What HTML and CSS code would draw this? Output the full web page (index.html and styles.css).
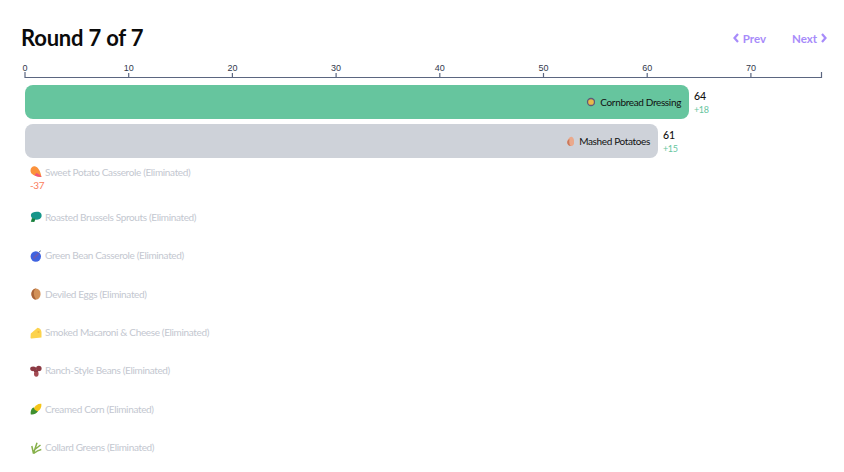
FILE: index.html
```html
<!DOCTYPE html>
<html lang="en">
<head>
<meta charset="utf-8">
<title>Round 7 of 7</title>
<link rel="stylesheet" href="styles.css">
</head>
<body>
<svg width="0" height="0" class="defs">
  <symbol id="i-corn" viewBox="0 0 12 12"><circle cx="8" cy="6" r="3.500" fill="#e9b949" stroke="#5f5a78" stroke-width="1.300"/></symbol>
  <symbol id="i-potato" viewBox="0 0 12 12"><g transform="translate(3.500 .8) scale(.85 .95)"><path d="M6.800 1C9 1 10.300 4 10.300 6.600 10.300 9 8.600 10.800 6.300 10.800 3.900 10.800 2 9.200 2 6.900 2 4.400 4.400 1 6.800 1Z" fill="#eaa98c"/><path d="M2 6.900C2 9.200 3.900 10.800 6.300 10.800 4.800 9.600 4 7.500 4.600 3C3 4.400 2 5.500 2 6.900Z" fill="#c9785c"/></g></symbol>
  <symbol id="i-sweet" viewBox="0 0 12 12"><path d="M.5 4.500C.5 1.500 3-.2 5.500.5 8.500 1.400 10.800 6 11.500 11 7.500 10.800 3.500 9.800 1.800 7.800 1 7 .5 5.800.5 4.500Z" fill="#fb923c"/><path d="M6.500 7C8.500 8 10.500 9 11.500 11 9 11.200 6.500 10.500 4.500 9.300Z" fill="#f2557a"/></symbol>
  <symbol id="i-sprout" viewBox="0 0 12 12"><path d="M1 3.500C1.500 1 5.500.3 8.500.8 11 1.300 12 3.500 11.500 5.800 10.800 8.300 7.500 9 5 8.500 2.500 8 .5 6 1 3.500Z" fill="#16968a"/><path d="M2 7 5.500 8 4.300 11 .8 10.800Z" fill="#17803d"/></symbol>
  <symbol id="i-bean" viewBox="0 0 12 12"><circle cx="5.800" cy="6.500" r="5.200" fill="#3f63e0"/><path d="M3.500 8.500 8.500 3.500" stroke="#6d5bb0" stroke-width="1.800"/><path d="M9 2 10.800.8" stroke="#55708f" stroke-width="1"/></symbol>
  <symbol id="i-egg" viewBox="0 0 12 12"><ellipse cx="6" cy="6" rx="4.600" ry="5.600" fill="#d29158"/><path d="M6 .4C3.200 1.500 2.800 8 6.500 11.600 3.500 11.800 1.400 9 1.400 6 1.400 3 3.500.4 6 .4Z" fill="#a9653a"/></symbol>
  <symbol id="i-cheese" viewBox="0 0 12 12"><path d="M.8 6.500 7.500.8C10 1.200 11.500 3 11.500 5.500V10.500L1.500 11.500C.8 11.500.5 11 .5 10.500Z" fill="#fcd34d"/><circle cx="8.500" cy="5" r="1.100" fill="#f2b63c"/></symbol>
  <symbol id="i-beans" viewBox="0 0 12 12"><ellipse cx="3.200" cy="3.800" rx="3" ry="2.400" fill="#8c3a44"/><ellipse cx="8.800" cy="3.500" rx="2.800" ry="2.700" fill="#8c3a44"/><ellipse cx="6.300" cy="8.800" rx="2.300" ry="3" fill="#a34a52"/><path d="M4 4.500h4v2.500H4Z" fill="#8c3a44"/></symbol>
  <symbol id="i-cob" viewBox="0 0 12 12"><path d="M3.500 6C5 2.500 8 .5 11.300.8 11.800 4.500 10 7.500 6.500 9Z" fill="#f5c518"/><path d="M.8 11.500C.3 8 1.500 5 3.800 4.500 4.300 6.500 5.500 8 8 8.300 6 11 3.500 12 .8 11.500Z" fill="#3f8f2f"/></symbol>
  <symbol id="i-greens" viewBox="0 0 12 12"><path d="M3.500 11.500C4.500 8 6 4 7 .8M3.500 11.500 1.800 4M3.500 11.500C6 9.500 8.500 8 11.300 7.500M4.800 7.500 10.500 3" stroke="#86b04a" stroke-width="1.500" fill="none"/></symbol>
</svg>

<header class="top">
  <h1 class="title">Round 7 of 7</h1>
  <nav class="pager">
    <a class="page-link prev"><svg class="chev" viewBox="0 0 6 10"><path d="M5 1 1.500 5 5 9"/></svg>Prev</a>
    <a class="page-link next">Next<svg class="chev" viewBox="0 0 6 10"><path d="M1 1 4.500 5 1 9"/></svg></a>
  </nav>
</header>

<svg class="axis" width="844" height="23" viewBox="0 0 844 23">
  <path class="axis-line" d="M25 12V17.500H821.500V12"/>
  <path class="axis-line" d="M128.700 13V17M232.400 13V17M336.100 13V17M439.800 13V17M543.500 13V17M647.200 13V17M750.900 13V17"/>
  <g class="ticks">
    <text x="25" y="11">0</text><text x="128.700" y="11">10</text><text x="232.400" y="11">20</text><text x="336.100" y="11">30</text><text x="439.800" y="11">40</text><text x="543.500" y="11">50</text><text x="647.200" y="11">60</text><text x="750.900" y="11">70</text>
  </g>
</svg>

<main class="chart">
  <div class="row">
    <div class="bar bar-green" style="width:664px"><svg class="icon"><use href="#i-corn"/></svg><span>Cornbread Dressing</span></div>
    <div class="value"><b>64</b><i class="up">+18</i></div>
  </div>
  <div class="row">
    <div class="bar bar-grey" style="width:633px"><svg class="icon"><use href="#i-potato"/></svg><span>Mashed Potatoes</span></div>
    <div class="value"><b>61</b><i class="up">+15</i></div>
  </div>
  <div class="row out">
    <div class="out-wrap">
      <div class="out-name"><svg class="icon"><use href="#i-sweet"/></svg><span>Sweet Potato Casserole (Eliminated)</span></div>
      <div class="down">-37</div>
    </div>
  </div>
  <div class="row out"><div class="out-name"><svg class="icon"><use href="#i-sprout"/></svg><span>Roasted Brussels Sprouts (Eliminated)</span></div></div>
  <div class="row out"><div class="out-name"><svg class="icon"><use href="#i-bean"/></svg><span>Green Bean Casserole (Eliminated)</span></div></div>
  <div class="row out"><div class="out-name"><svg class="icon"><use href="#i-egg"/></svg><span>Deviled Eggs (Eliminated)</span></div></div>
  <div class="row out"><div class="out-name"><svg class="icon"><use href="#i-cheese"/></svg><span>Smoked Macaroni &amp; Cheese (Eliminated)</span></div></div>
  <div class="row out"><div class="out-name"><svg class="icon"><use href="#i-beans"/></svg><span>Ranch-Style Beans (Eliminated)</span></div></div>
  <div class="row out"><div class="out-name"><svg class="icon"><use href="#i-cob"/></svg><span>Creamed Corn (Eliminated)</span></div></div>
  <div class="row out"><div class="out-name"><svg class="icon"><use href="#i-greens"/></svg><span>Collard Greens (Eliminated)</span></div></div>
</main>
</body>
</html>
```

FILE: styles.css
```css
html, body { margin: 0; padding: 0; background: #fff; }
body { font-family: Lato, "Open Sans", sans-serif; width: 844px; height: 472px; overflow: hidden; }
.defs { position: absolute; }

.top { display: flex; justify-content: space-between; align-items: center; height: 38px; padding: 19px 17px 0 21px; }
.title { margin: 0; font-size: 22px; letter-spacing: -0.2px; font-weight: 700; color: #0b0b0b; line-height: 38px; }
.pager { display: flex; gap: 26px; }
.page-link { display: flex; align-items: center; gap: 4px; font-size: 11.5px; font-weight: 700; color: #a78bfa; }
.chev { width: 6px; height: 10px; }
.chev path { fill: none; stroke: #a78bfa; stroke-width: 2.2; }

.axis { display: block; margin-top: 3px; }
.axis-line { fill: none; stroke: #5b6680; stroke-width: 1.2; }
.ticks text { font: 9px "Liberation Sans", sans-serif; fill: #333a4d; text-anchor: middle; }

.chart { padding-left: 25px; }
.row { display: flex; align-items: center; height: 38.4px; }
.bar { display: flex; align-items: center; justify-content: flex-end; gap: 5px; height: 34px; border-radius: 8px; padding-right: 8px; box-sizing: border-box; font-size: 10px; letter-spacing: -0.35px; color: #111; }
.bar-green { background: #66c59e; }
.bar-grey { background: #ced2d9; }
.icon { width: 12px; height: 12px; flex: none; }
.value { display: flex; flex-direction: column; gap: 2px; margin-left: 5px; padding-top: 2px; font-size: 9px; letter-spacing: -0.4px; line-height: 11px; }
.value b { font-weight: 500; font-size: 10.5px; letter-spacing: -0.2px; color: #111; }
.value i { font-style: normal; }
.up { color: #66c59e; }
.out-name { display: flex; align-items: center; gap: 3px; padding-left: 5px; font-size: 10px; letter-spacing: -0.35px; line-height: 13px; color: #c3c7d0; }
.down { font-size: 10px; letter-spacing: -0.4px; line-height: 13px; color: #fb7d5b; padding-left: 5px; }
```
